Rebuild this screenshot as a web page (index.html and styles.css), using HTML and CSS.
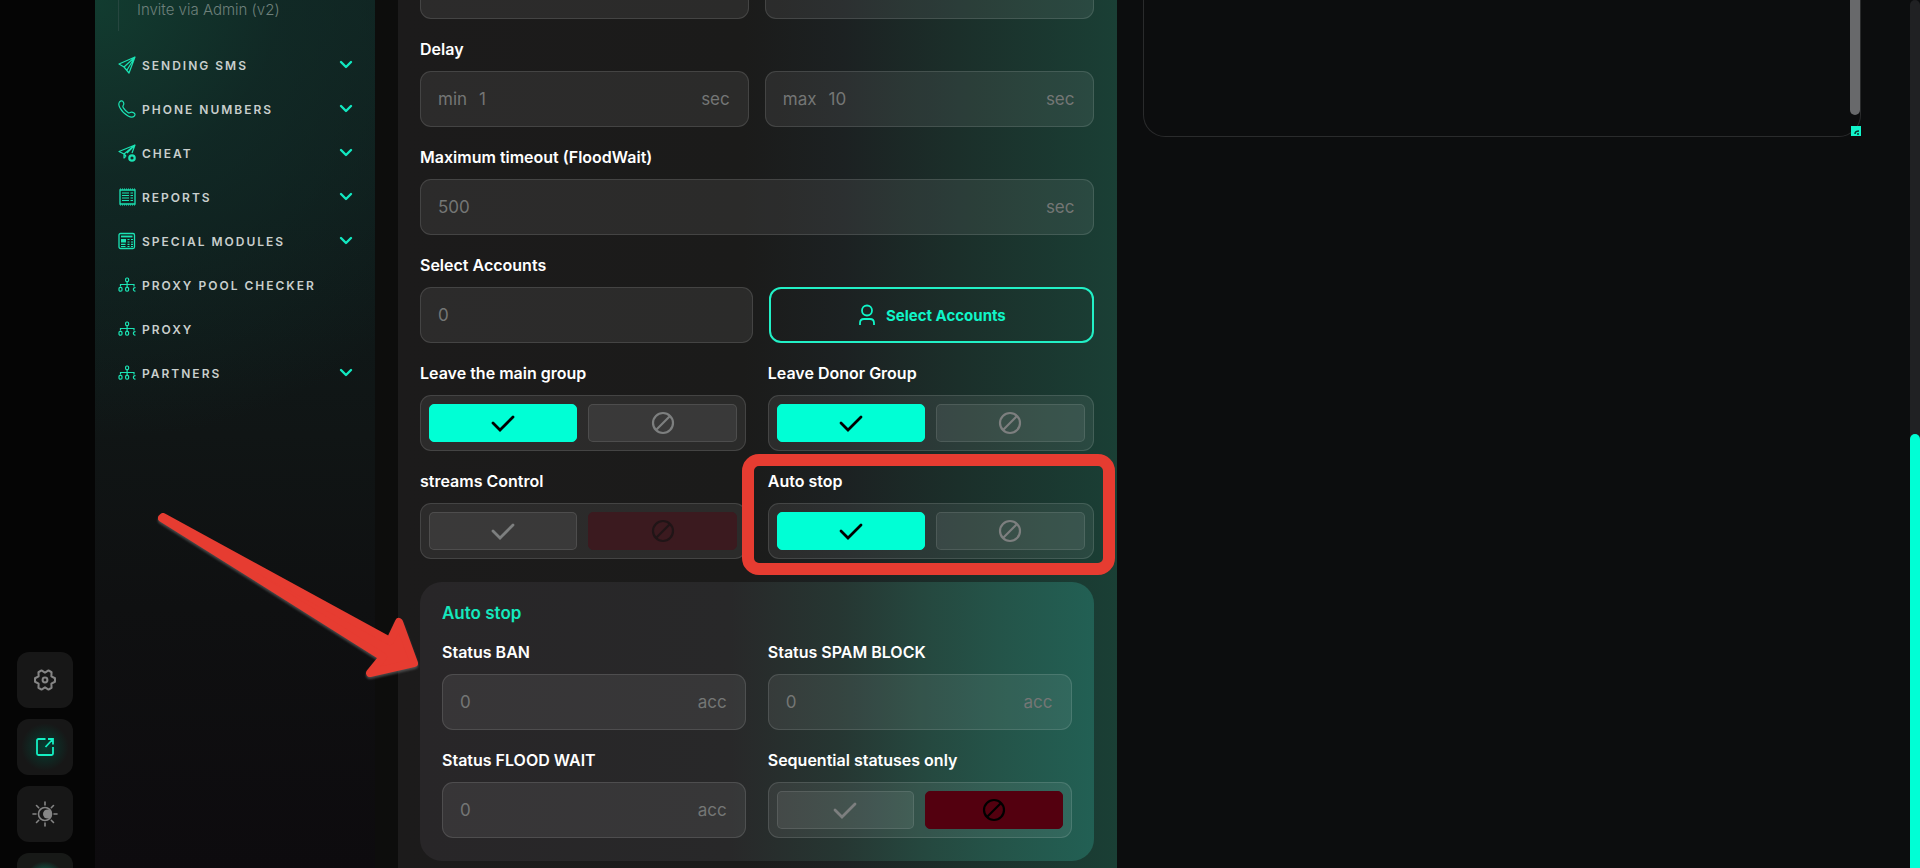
FILE: index.html
```html
<!DOCTYPE html>
<html lang="en">
<head>
    <meta charset="UTF-8">
    <meta name="viewport" content="width=device-width, initial-scale=1.0">
    <title>Inviting</title>
    <link rel="stylesheet" href="styles.css">
</head>
<body>
    <!-- Shared icons -->
    <svg class="sprite" aria-hidden="true">
        <symbol id="i-chevron" viewBox="0 0 14 10"><path d="M2 2l5 5 5-5" fill="none" stroke="currentColor" stroke-width="2.4" stroke-linecap="round" stroke-linejoin="round"/></symbol>
        <symbol id="i-plane" viewBox="0 0 18 18"><path d="M17 1L1 8l5 3 5 6zM17 1L6 11M17 1L9 14" fill="none" stroke="currentColor" stroke-width="1.2" stroke-linejoin="round"/></symbol>
        <symbol id="i-phone" viewBox="0 0 18 18"><path d="M1.5 2C3 .4 4.6.6 5.4 2.2c.8 1.6.6 2.3-.2 3.3-.6.8-.4 1.4.2 2.3 1.3 2 2.6 3.300 4.500 4.600.9.6 1.500.7 2.300.1 1.200-.8 2-.8 3.500.3 1.700 1.200 1.700 2.200.4 3.500-1.400 1.300-3.400 1.200-6-.3C6.500 14 3.600 11 1.900 7.800.6 5.300.5 3.300 1.500 2z" fill="none" stroke="currentColor" stroke-width="1.2"/></symbol>
        <symbol id="i-cheat" viewBox="0 0 18 18"><path d="M8 12L6 10 1 7.500 17 1l-3 8M17 1L6 10v4l2-2M17 1L9 9" fill="none" stroke="currentColor" stroke-width="1.2" stroke-linejoin="round"/><circle cx="14" cy="14" r="2.700" fill="none" stroke="currentColor" stroke-width="2.2"/></symbol>
        <symbol id="i-report" viewBox="0 0 18 18"><path d="M2 2h15v14H2z" fill="none" stroke="currentColor" stroke-width="1.3"/><path d="M2 1h15M2 17h15" stroke="currentColor" stroke-width="1" stroke-dasharray="1 1"/><path d="M4 5h7M12.500 5H15M4 7.500h7M12.500 7.500H15M4 10h7M12.500 10H15M4 12.500h7M12.500 12.500H15" stroke="currentColor" stroke-width="1.2"/></symbol>
        <symbol id="i-modules" viewBox="0 0 18 18"><rect x="1" y="1.500" width="15.500" height="15" rx="1.500" fill="none" stroke="currentColor" stroke-width="1.3"/><path d="M3 4.500h11.500" stroke="currentColor" stroke-width="1.8"/><path d="M3 7h5v3.500H3z" fill="currentColor"/><path d="M9.500 7.500h2M13 7.500h2M9.500 10h2M13 10h2M3 12.300h4.500M9.500 12.300h2M13 12.300h2M3 14.500h4.500M9.500 14.500h2M13 14.500h2" stroke="currentColor" stroke-width="1.2"/></symbol>
        <symbol id="i-proxy" viewBox="0 0 18 18"><g fill="none" stroke="currentColor" stroke-width="1.2"><rect x="7.600" y="2" width="3" height="3.600" rx="1.200"/><path d="M9.100 5.600V11M2.500 10.500V8.500h13.500v2"/><rect x="1" y="11.400" width="3" height="3.800" rx="1.200"/><rect x="7.600" y="11.400" width="3" height="3.800" rx="1.200"/><path d="M17.500 11.600c-2.800-.6-2.800 4 0 3.400"/></g></symbol>
        <symbol id="i-check" viewBox="0 0 24 24"><path d="M2 12l7 7L22 6" fill="none" stroke="currentColor" stroke-width="2.8" stroke-linecap="round"/></symbol>
        <symbol id="i-ban" viewBox="0 0 24 24"><g fill="none" stroke="currentColor" stroke-width="2.2"><circle cx="12" cy="12" r="10"/><path d="M19 5L5 19"/></g></symbol>
    </svg>

    <div class="app">
        <aside class="rail">
            <button class="rail-btn" type="button" aria-label="Settings">
                <svg width="24" height="24" viewBox="-1 -1 26 26" fill="none" stroke="currentColor" stroke-width="2.2" stroke-linejoin="round"><path d="M22.800 10.100V13.900L18.900 16 19.100 20.400 15.800 22.300 12 20 8.200 22.300 4.900 20.400 5.100 16 1.200 13.900V10.100L5.100 8 4.900 3.600 8.200 1.700 12 4 15.800 1.700 19.100 3.600 18.900 8z"/><circle cx="12" cy="12" r="2.600"/></svg>
            </button>
            <button class="rail-btn active" type="button" aria-label="Open in new window">
                <svg width="20" height="20" viewBox="0 0 20 20" fill="none" stroke="currentColor" stroke-width="1.800"><path d="M10.500 2H3.500Q2 2 2 3.500v13Q2 18 3.500 18h13q1.500 0 1.500-1.500V10M10.500 10L18 2M13 2h5v5.500"/></svg>
            </button>
            <button class="rail-btn" type="button" aria-label="Theme">
                <svg width="26" height="26" viewBox="0 0 26 26" fill="none" stroke="currentColor" stroke-width="1.600" stroke-linecap="round"><circle cx="13" cy="13" r="6.500"/><circle cx="15.500" cy="13" r="4.500" fill="currentColor" stroke="none"/><path d="M13 1v3M13 22v3M1 13h3M22 13h3M4.500 4.500l2.200 2.200M19.300 19.300l2.200 2.200M4.500 21.500l2.200-2.200M19.300 6.700l2.200-2.200"/></svg>
            </button>
            <button class="rail-btn glow" type="button" aria-label="Support"></button>
        </aside>

        <nav class="sidebar">
            <div class="submenu"><a href="#">Invite via Admin (v2)</a></div>
            <a class="menu-item" href="#"><svg class="menu-icon"><use href="#i-plane"/></svg><span>SENDING SMS</span><svg class="chevron"><use href="#i-chevron"/></svg></a>
            <a class="menu-item" href="#"><svg class="menu-icon"><use href="#i-phone"/></svg><span>PHONE NUMBERS</span><svg class="chevron"><use href="#i-chevron"/></svg></a>
            <a class="menu-item" href="#"><svg class="menu-icon"><use href="#i-cheat"/></svg><span>CHEAT</span><svg class="chevron"><use href="#i-chevron"/></svg></a>
            <a class="menu-item" href="#"><svg class="menu-icon"><use href="#i-report"/></svg><span>REPORTS</span><svg class="chevron"><use href="#i-chevron"/></svg></a>
            <a class="menu-item" href="#"><svg class="menu-icon"><use href="#i-modules"/></svg><span>SPECIAL MODULES</span><svg class="chevron"><use href="#i-chevron"/></svg></a>
            <a class="menu-item" href="#"><svg class="menu-icon"><use href="#i-proxy"/></svg><span>PROXY POOL CHECKER</span></a>
            <a class="menu-item" href="#"><svg class="menu-icon"><use href="#i-proxy"/></svg><span>PROXY</span></a>
            <a class="menu-item" href="#"><svg class="menu-icon"><use href="#i-proxy"/></svg><span>PARTNERS</span><svg class="chevron"><use href="#i-chevron"/></svg></a>
        </nav>

        <main class="content">
            <form class="panel">
                <div class="row row-first">
                    <div class="input-box"><input type="text" aria-label="Invites from"></div>
                    <div class="input-box"><input type="text" aria-label="Invites to"></div>
                </div>

                <div class="field">
                    <label class="label" for="delay-min">Delay</label>
                    <div class="row">
                        <div class="input-box"><span>min</span><input type="text" id="delay-min" placeholder="1"><span>sec</span></div>
                        <div class="input-box"><label for="delay-max">max</label><input type="text" id="delay-max" placeholder="10"><span>sec</span></div>
                    </div>
                </div>

                <div class="field">
                    <label class="label" for="timeout">Maximum timeout (FloodWait)</label>
                    <div class="input-box"><input type="text" id="timeout" placeholder="500"><span>sec</span></div>
                </div>

                <div class="field">
                    <label class="label" for="accounts">Select Accounts</label>
                    <div class="row row-accounts">
                        <div class="input-box"><input type="text" id="accounts" placeholder="0"></div>
                        <button class="select-btn" type="button">
                            <svg width="20" height="22" viewBox="0 0 20 22" fill="none" stroke="currentColor" stroke-width="1.800"><circle cx="10" cy="6.500" r="5"/><path d="M3 21v-2Q3 15 7 15h6q4 0 4 4v2"/></svg>
                            Select Accounts
                        </button>
                    </div>
                </div>

                <div class="row row-wide">
                    <div class="field">
                        <div class="label" id="l-main">Leave the main group</div>
                        <div class="toggle" role="group" aria-labelledby="l-main">
                            <button class="on" type="button" aria-label="Yes"><svg><use href="#i-check"/></svg></button>
                            <button type="button" aria-label="No"><svg><use href="#i-ban"/></svg></button>
                        </div>
                    </div>
                    <div class="field">
                        <div class="label" id="l-donor">Leave Donor Group</div>
                        <div class="toggle" role="group" aria-labelledby="l-donor">
                            <button class="on" type="button" aria-label="Yes"><svg><use href="#i-check"/></svg></button>
                            <button type="button" aria-label="No"><svg><use href="#i-ban"/></svg></button>
                        </div>
                    </div>
                </div>

                <div class="row row-wide">
                    <div class="field">
                        <div class="label" id="l-streams">streams Control</div>
                        <div class="toggle" role="group" aria-labelledby="l-streams">
                            <button type="button" aria-label="Yes"><svg><use href="#i-check"/></svg></button>
                            <button class="off-dim" type="button" aria-label="No"><svg><use href="#i-ban"/></svg></button>
                        </div>
                    </div>
                    <div class="field">
                        <div class="label" id="l-auto">Auto stop</div>
                        <div class="toggle" role="group" aria-labelledby="l-auto">
                            <button class="on" type="button" aria-label="Yes"><svg><use href="#i-check"/></svg></button>
                            <button type="button" aria-label="No"><svg><use href="#i-ban"/></svg></button>
                        </div>
                    </div>
                </div>

                <section class="autostop">
                    <h2>Auto stop</h2>
                    <div class="row row-wide">
                        <div class="field">
                            <label class="label" for="ban">Status BAN</label>
                            <div class="input-box"><input type="text" id="ban" placeholder="0"><span>acc</span></div>
                        </div>
                        <div class="field">
                            <label class="label" for="spam">Status SPAM BLOCK</label>
                            <div class="input-box"><input type="text" id="spam" placeholder="0"><span>acc</span></div>
                        </div>
                    </div>
                    <div class="row row-wide">
                        <div class="field">
                            <label class="label" for="flood">Status FLOOD WAIT</label>
                            <div class="input-box"><input type="text" id="flood" placeholder="0"><span>acc</span></div>
                        </div>
                        <div class="field">
                            <div class="label" id="l-seq">Sequential statuses only</div>
                            <div class="toggle" role="group" aria-labelledby="l-seq">
                                <button type="button" aria-label="Yes"><svg><use href="#i-check"/></svg></button>
                                <button class="off" type="button" aria-label="No"><svg><use href="#i-ban"/></svg></button>
                            </div>
                        </div>
                    </div>
                </section>
            </form>

            <div class="log">
                <div class="log-scroll"></div>
                <svg class="log-corner" viewBox="0 0 10 10"><path d="M4 8q0-3 4-3M7 9V7" fill="none" stroke="#06382e" stroke-width="1.500"/></svg>
            </div>
        </main>

        <div class="page-scroll"><div class="page-thumb"></div></div>
    </div>

    <!-- Hint marks over the form -->
    <div class="mark-frame"></div>
    <svg class="mark-arrow" width="264" height="172" viewBox="0 0 264 172"><path d="M6 6L233 130L242 111L257 152L213 162L226 146L5 7Z" fill="#e63c31" stroke="#e63c31" stroke-width="8" stroke-linejoin="round"/></svg>
</body>
</html>
```
FILE: styles.css
```css
* {
    box-sizing: border-box;
}
body {
    margin: 0;
    background: #0c0d0e;
    color: #fff;
    font-family: Inter, "Liberation Sans", sans-serif;
    font-size: 16px;
    overflow: hidden;
}
button, input {
    font: inherit;
}
button {
    cursor: pointer;
}
a {
    color: inherit;
    text-decoration: none;
}
.sprite {
    display: none;
}
.app {
    display: flex;
    height: 100vh;
    overflow: hidden;
}

/* Left icon rail */
.rail {
    flex: 0 0 95px;
    display: flex;
    flex-direction: column;
    gap: 11px;
    padding-left: 17px;
    padding-top: 652px;
    background: #050505;
}
.rail-btn {
    flex: none;
    display: flex;
    align-items: center;
    justify-content: center;
    width: 56px;
    height: 56px;
    padding: 0;
    border: 0;
    border-radius: 12px;
    background: #171717;
    color: #858585;
}
.rail-btn.active {
    background: radial-gradient(circle, #063d31 0, #171717 60%);
    color: #14f0c3;
}
.rail-btn.glow {
    background: radial-gradient(circle at 50% 50%, #0b8c70 0, #171917 50%);
}

/* Menu */
.sidebar {
    flex: 0 0 280px;
    padding: 0 22px 0 23px;
    background:
        radial-gradient(ellipse 460px 440px at 0 0, #123c30 0, rgba(17, 45, 40, 0.7) 40%, rgba(16, 24, 24, 0) 100%),
        linear-gradient(#10201f 0, #0f1a1a 25%, #101515 50%, #0f1011 70%, #0d0b0e 100%);
}
.submenu {
    height: 31px;
    padding-left: 18px;
    border-left: 1px solid #26463f;
    color: #6e807b;
    line-height: 20px;
    font-weight: 300;
    font-size: 15px;
}
.submenu + .menu-item {
    margin-top: 12px;
}
.menu-item {
    display: flex;
    align-items: center;
    height: 44px;
    color: #c9cfcd;
    font-size: 12px;
    font-weight: 600;
    letter-spacing: 2px;
}
.menu-icon {
    width: 18px;
    height: 18px;
    margin-right: 6px;
    color: #1be3b4;
}
.chevron {
    width: 14px;
    height: 10px;
    margin-left: auto;
    color: #12e8c0;
}

/* Form */
.content {
    flex: 1;
    display: grid;
    grid-template-columns: minmax(0, 1fr) minmax(0, 1fr);
    gap: 26px;
    padding: 0 49px 0 23px;
    background: linear-gradient(90deg, #0d0d0c 0, #0c0d0e 30%);
}
.panel {
    padding: 0 23px 0 22px;
    background:
        linear-gradient(90deg, #1c1b1b 0, #1b1b1a 48%, #1c2122 62%, #1b2f2a 78%, #1a3f35 100%);
}
.row {
    display: grid;
    grid-template-columns: minmax(0, 1fr) minmax(0, 1fr);
    gap: 16px;
}
.row-wide {
    gap: 22px;
}
.row-accounts {
    grid-template-columns: 333fr 324fr;
}
.row-first {
    margin-top: -37px;
    margin-bottom: 18px;
}
.field {
    margin-bottom: 18px;
}
.row-wide > .field {
    min-width: 0;
}
.label {
    display: block;
    margin-bottom: 10px;
    line-height: 24px;
    font-weight: 600;
}
.input-box {
    display: flex;
    align-items: center;
    gap: 12px;
    min-width: 0;
    height: 56px;
    padding: 0 18px 0 17px;
    border: 1px solid rgba(255, 255, 255, 0.12);
    border-radius: 11px;
    background: rgba(255, 255, 255, 0.07);
    color: #747675;
    font-size: 17px;
}
.input-box input {
    flex: 1;
    width: 100%;
    min-width: 0;
    padding: 0;
    border: 0;
    outline: 0;
    background: none;
    color: #fff;
}
.input-box input::placeholder {
    color: #747675;
    opacity: 1;
}
.select-btn {
    display: flex;
    align-items: center;
    justify-content: center;
    gap: 9px;
    border: 2px solid #22f0c6;
    border-radius: 12px;
    background: transparent;
    color: #10f5c8;
    font-size: 15px;
    font-weight: 700;
}
.toggle {
    display: grid;
    grid-template-columns: 1fr 1fr;
    gap: 11px;
    height: 56px;
    padding: 8px;
    border: 1px solid rgba(255, 255, 255, 0.12);
    border-radius: 11px;
    background: rgba(255, 255, 255, 0.07);
}
.toggle button {
    display: flex;
    align-items: center;
    justify-content: center;
    padding: 0;
    border: 1px solid rgba(255, 255, 255, 0.1);
    border-radius: 5px;
    background: rgba(255, 255, 255, 0.07);
    color: #7d7f7f;
}
.toggle svg {
    width: 24px;
    height: 24px;
}
.toggle .on {
    border-color: #00ffd5;
    background: #00ffd5;
    color: #000;
}
.toggle .off {
    border-color: #53000f;
    background: #53000f;
    color: #000;
}
.toggle .off-dim {
    border-color: #3b1a1f;
    background: #3b1a1f;
    color: #201517;
}
.autostop {
    margin-top: 5px;
    padding: 18px 22px 5px;
    border-radius: 22px;
    background: linear-gradient(90deg, #282628 0, #282829 46%, #263632 62%, #25483f 75%, #245449 86%, #226054 100%);
}
.autostop h2 {
    margin: 0 0 14px;
    color: #14e8bd;
    font-size: 17px;
    line-height: 26px;
    font-weight: 600;
}

/* Log box on the right */
.log {
    position: relative;
    height: 137px;
    border: 1px solid #2a2b2c;
    border-top: 0;
    border-radius: 0 0 22px 22px;
}
.log-scroll {
    width: 10px;
    height: 115px;
    margin-left: auto;
    border-radius: 0 0 5px 5px;
    background: #68696b;
}
.log-corner {
    position: absolute;
    right: -1px;
    bottom: 0;
    width: 10px;
    height: 10px;
    background: #12f5cb;
}
.page-scroll {
    flex: 0 0 10px;
    padding-top: 434px;
    border-radius: 5px 5px 0 0;
    background: #202123;
}
.page-thumb {
    height: 100%;
    border-radius: 5px 5px 0 0;
    background: #00ffd5;
}

/* Marks */
.mark-frame {
    position: absolute;
    left: 742px;
    top: 454px;
    width: 373px;
    height: 121px;
    border: 12px solid #e63c31;
    border-radius: 17px;
}
.mark-arrow {
    position: absolute;
    left: 157px;
    top: 511px;
    filter: drop-shadow(0 2px 1px rgba(130, 130, 130, 0.5));
}
```
